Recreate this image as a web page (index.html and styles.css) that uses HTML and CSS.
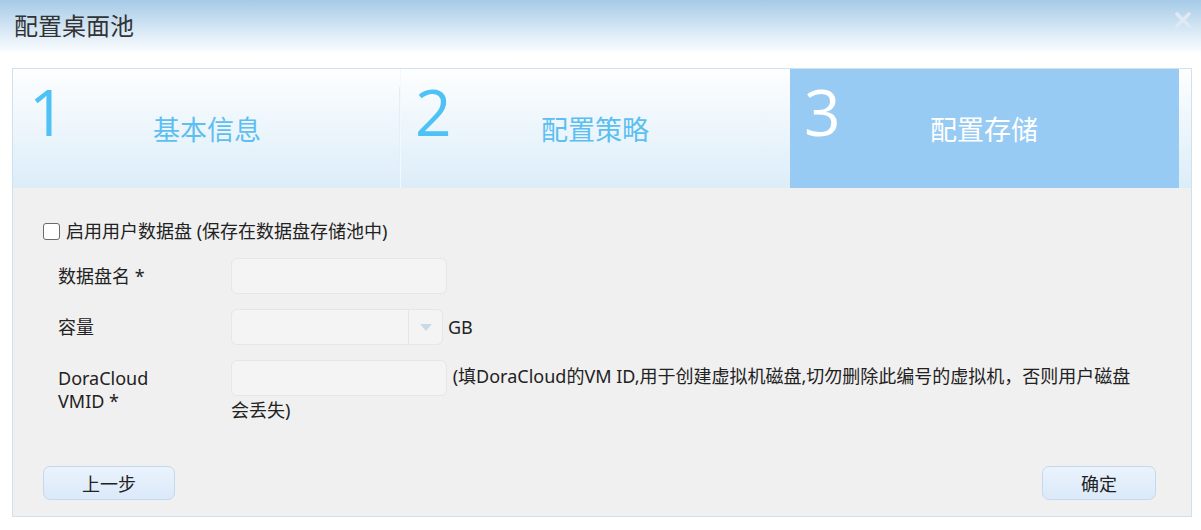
FILE: index.html
```html
<!DOCTYPE html>
<html lang="zh">
<head>
<meta charset="utf-8">
<link rel="stylesheet" href="styles.css">
</head>
<body>
<div class="dialog">
  <div class="header">
    <div class="title">配置桌面池</div>
    <svg class="close" width="16" height="16" viewBox="0 0 16 16"><path d="M2 2 L14 14 M14 2 L2 14" stroke="#dfe9f3" stroke-width="3.6" stroke-linecap="round"/></svg>
  </div>
  <div class="wizard">
    <div class="steps">
      <div class="step s1"><span class="num">1</span><span class="label">基本信息</span></div>
      <div class="step s2"><span class="num">2</span><span class="label">配置策略</span></div>
      <div class="step s3 active"><span class="num">3</span><span class="label">配置存储</span></div>
    </div>
    <div class="body">
      <div class="check-row"><span class="checkbox"></span><span>启用用户数据盘 (保存在数据盘存储池中)</span></div>
      <div class="form">
        <div class="row">
          <div class="lbl">数据盘名 *</div>
          <div class="field"><span class="input"></span></div>
        </div>
        <div class="row">
          <div class="lbl">容量</div>
          <div class="field"><span class="select"><span class="sel-val"></span><span class="sel-btn"><svg width="12" height="7" viewBox="0 0 12 7"><path d="M0 0 H12 L6 7 Z" fill="#c9d9e8"/></svg></span></span> GB</div>
        </div>
        <div class="row">
          <div class="lbl">DoraCloud<br>VMID *</div>
          <div class="field note"><span class="input"></span> (填DoraCloud的VM ID,用于创建虚拟机磁盘,切勿删除此编号的虚拟机，否则用户磁盘会丢失)</div>
        </div>
      </div>
      <div class="buttons">
        <button class="btn prev">上一步</button>
        <button class="btn ok">确定</button>
      </div>
    </div>
  </div>
</div>
</body>
</html>
```
FILE: styles.css
```css
* { box-sizing: border-box; }
html, body { margin: 0; padding: 0; background: #fff; }
body {
  font-family: "Noto Sans", "Noto Sans CJK SC", sans-serif;
  color: #222;
  font-size: 18px;
  width: 1201px;
  height: 530px;
  overflow: hidden;
}
.header {
  height: 68px;
  background: linear-gradient(to bottom, #a6cae7 0px, #d4e6f4 28px, #fbfdff 52px, #fff 56px);
  display: flex;
  align-items: flex-start;
  justify-content: space-between;
  padding: 9px 10px 0 14px;
}
.title {
  font-size: 24px;
  line-height: 32px;
  color: #333;
  font-family: "Noto Sans CJK SC", sans-serif;
}
.close { margin-top: 3px; }
.wizard {
  margin-left: 12px;
  width: 1180px;
  height: 449px;
  border: 1px solid #cfe1ef;
  display: flex;
  flex-direction: column;
}
.steps {
  height: 119px;
  display: flex;
  background: linear-gradient(to bottom, #fdfeff, #dcedf8);
}
.step {
  position: relative;
  display: flex;
  align-items: flex-start;
  padding-left: 16px;
  height: 100%;
}
.s1 { width: 387px; }
.s2 { width: 390px; border-left: 1px solid #f3f8fc; padding-left: 14px; }
.s1::after {
  content: "";
  position: absolute;
  right: 0; top: 18px; bottom: 10px;
  width: 1px;
  background: #e4eef6;
}
.s3 { width: 389px; padding-left: 14px; }
.active { background: #97cbf3; }
.num {
  font-family: "Open Sans", sans-serif;
  font-weight: 400;
  font-size: 64px;
  line-height: 1;
  color: #4ec2f5;
  width: 124px;
  margin-top: 11px;
}
.s2 .num { width: 126px; }
.s3 .num { width: 126px; }
.label {
  font-family: "Noto Sans CJK SC", sans-serif;
  font-size: 27px;
  line-height: 36px;
  color: #5cbff1;
  margin-top: 42px;
}
.active .num, .active .label { color: #fff; }
.body {
  flex: 1;
  background: #f1f0f0;
  display: flex;
  flex-direction: column;
  padding: 31px 35px 15px 30px;
}
.check-row {
  display: flex;
  align-items: center;
  gap: 6px;
  height: 24px;
  line-height: 24px;
}
.checkbox {
  width: 17px;
  height: 17px;
  border: 1.5px solid #6a6a6a;
  border-radius: 3px;
  background: #fff;
}
.form {
  margin-top: 15px;
  display: flex;
  flex-direction: column;
  gap: 15px;
  padding-left: 15px;
}
.row {
  display: flex;
  align-items: flex-start;
}
.lbl {
  width: 173px;
  line-height: 23px;
  padding-top: 7px;
}
.field {
  line-height: 36px;
  display: flex;
  align-items: center;
}
.input {
  display: inline-block;
  width: 216px;
  height: 36px;
  background: #f5f4f4;
  border: 1px solid #e3e6ea;
  border-radius: 6px;
  vertical-align: middle;
}
.select {
  display: inline-flex;
  width: 212px;
  height: 36px;
  background: #f5f4f4;
  border: 1px solid #e3e6ea;
  border-radius: 6px;
  margin-right: 5px;
}
.sel-val { flex: 1; }
.sel-btn {
  width: 34px;
  border-left: 1px solid #e3e6ea;
  display: flex;
  align-items: center;
  justify-content: center;
}
.note {
  display: block;
  width: 910px;
  line-height: 28px;
}
.note .input { margin-right: 1px; }
.buttons {
  margin-top: auto;
  display: flex;
  justify-content: space-between;
}
.btn {
  font-family: "Noto Sans CJK SC", sans-serif;
  font-size: 18px;
  color: #222;
  height: 34px;
  background: linear-gradient(to bottom, #eaf3fd, #e2eefb 50%, #dbe9f9);
  border: 1px solid #c4d9ed;
  border-radius: 7px;
  padding: 0;
  margin-bottom: 1px;
}
.prev { width: 132px; }
.ok { width: 114px; }
```
